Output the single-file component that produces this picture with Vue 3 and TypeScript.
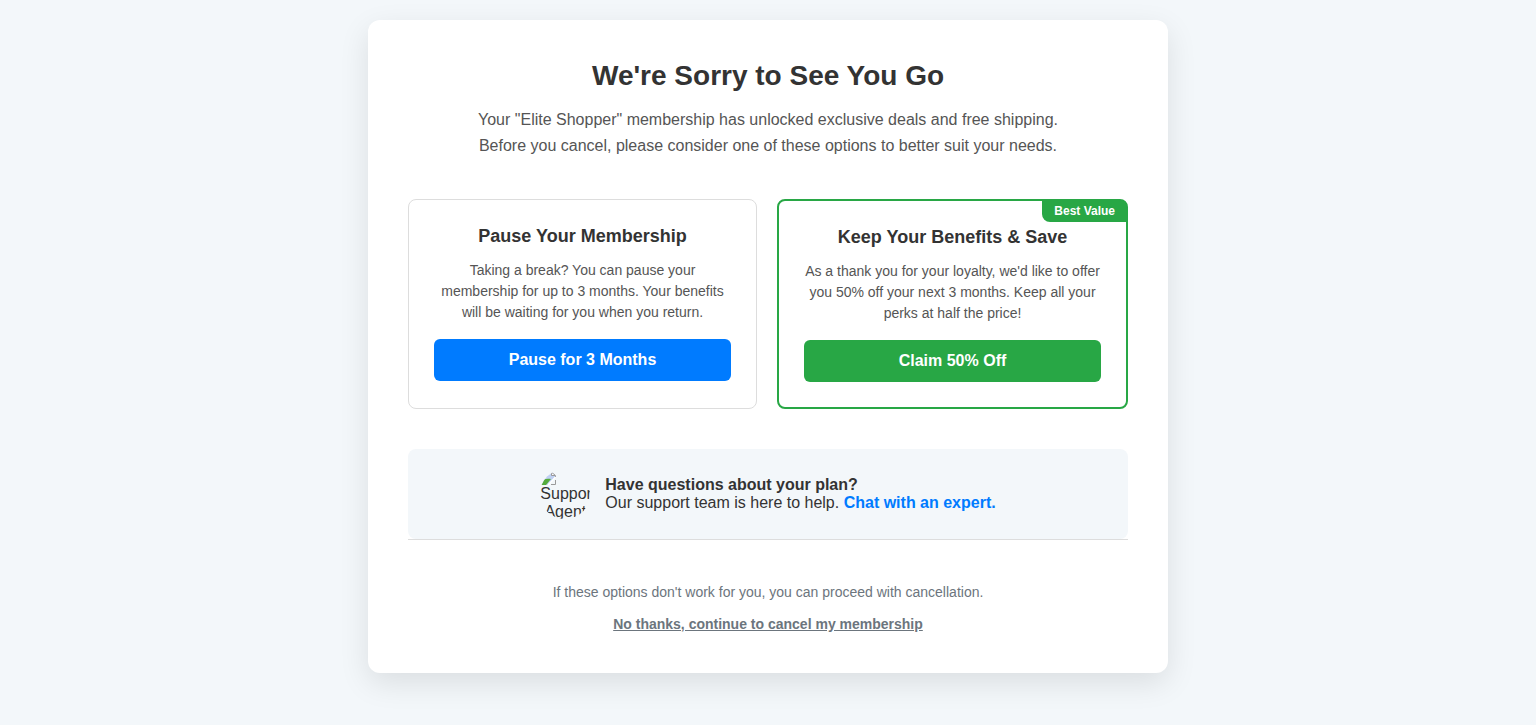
<script setup lang="ts">
interface Offer {
  title: string
  text: string
  action: string
  kind: 'pause' | 'save'
  badge?: string
}

const offers: Offer[] = [
  {
    title: 'Pause Your Membership',
    text: 'Taking a break? You can pause your membership for up to 3 months. Your benefits will be waiting for you when you return.',
    action: 'Pause for 3 Months',
    kind: 'pause',
  },
  {
    title: 'Keep Your Benefits & Save',
    text: "As a thank you for your loyalty, we'd like to offer you 50% off your next 3 months. Keep all your perks at half the price!",
    action: 'Claim 50% Off',
    kind: 'save',
    badge: 'Best Value',
  },
]
</script>

<template>
  <div class="page">
    <main class="panel">
      <header class="intro">
        <h1>We're Sorry to See You Go</h1>
        <p>
          Your "Elite Shopper" membership has unlocked exclusive deals and free shipping.
          Before you cancel, please consider one of these options to better suit your needs.
        </p>
      </header>

      <section class="offers">
        <article v-for="offer in offers" :key="offer.kind" class="offer" :class="offer.kind">
          <span v-if="offer.badge" class="badge">{{ offer.badge }}</span>
          <h2>{{ offer.title }}</h2>
          <p>{{ offer.text }}</p>
          <button type="button">{{ offer.action }}</button>
        </article>
      </section>

      <section class="support">
        <div class="avatar">
          <svg width="16" height="16" viewBox="0 0 16 16" aria-hidden="true">
            <path d="M1 2h10l4 4v2l-7 8H1z" fill="#bfd0f2" />
            <path d="M1 16v-3c2-3 6-4 10-3l-5 6z" fill="#54ab3c" />
            <path d="M11 3v3h4z" fill="#fff" />
            <path d="M9 3h2l4 3" fill="none" stroke="#a0a0a0" />
            <path d="M11.500 3v3.500h4V8" fill="none" stroke="#9a9a9a" />
            <path d="M8 16l7.500-8" fill="none" stroke="#fff" stroke-width="1.500" />
            <path d="M15.500 11v4.500H11" fill="none" stroke="#9a9a9a" />
          </svg>
          <span>Support Agent</span>
        </div>
        <div>
          <strong>Have questions about your plan?</strong>
          <p>Our support team is here to help. <a href="#chat">Chat with an expert.</a></p>
        </div>
      </section>

      <footer class="leave">
        <p>If these options don't work for you, you can proceed with cancellation.</p>
        <a href="#cancel">No thanks, continue to cancel my membership</a>
      </footer>
    </main>
  </div>
</template>

<style>
body {
  margin: 0;
  background: #f3f7fa;
}
</style>

<style scoped>
.page {
  box-sizing: border-box;
  min-height: 100vh;
  padding: 20px;
  background: #f3f7fa;
}

.panel {
  box-sizing: border-box;
  max-width: 800px;
  margin: 0 auto;
  padding: 40px;
  border-radius: 12px;
  background: #fff;
  box-shadow: 0 10px 30px rgba(0, 0, 0, 0.1);
  color: #333;
  font-family: 'Liberation Sans', Helvetica, Arial, sans-serif;
  font-size: 16px;
  line-height: 18px;
  text-align: center;
}

h1,
h2,
p {
  margin: 0;
}

.intro {
  margin-bottom: 40px;
}

.intro h1 {
  margin-bottom: 15px;
  font-size: 28px;
  line-height: 32px;
}

.intro p {
  max-width: 600px;
  margin: 0 auto;
  color: #555;
  line-height: 26px;
}

.offers {
  display: flex;
  gap: 20px;
  margin-bottom: 40px;
}

.offer {
  position: relative;
  flex: 1;
  padding: 25px;
  border: 1px solid #ddd;
  border-radius: 8px;
}

.offer.save {
  border: 2px solid #28a745;
}

.badge {
  position: absolute;
  top: -1px;
  right: -1px;
  padding: 4px 12px;
  border-radius: 0 8px;
  background: #28a745;
  color: #fff;
  font-size: 12px;
  font-weight: 700;
  line-height: 14px;
}

.offer h2 {
  margin-bottom: 12px;
  font-size: 18px;
  line-height: 23px;
}

.offer p {
  margin-bottom: 16px;
  color: #555;
  font-size: 14px;
  line-height: 21px;
}

.offer button {
  display: block;
  width: 100%;
  padding: 12px;
  border: 0;
  border-radius: 6px;
  background: #007bff;
  color: #fff;
  font: inherit;
  font-weight: 700;
  cursor: pointer;
}

.offer.save button {
  background: #28a745;
}

.support {
  display: flex;
  align-items: center;
  justify-content: center;
  gap: 15px;
  padding: 20px;
  border-radius: 8px;
  background: #f3f7fa;
  text-align: left;
}

.avatar {
  width: 50px;
  height: 50px;
  overflow: hidden;
  border-radius: 50%;
  text-align: center;
}

.avatar svg {
  display: block;
}

.support a {
  color: #007bff;
  font-weight: 700;
  text-decoration: none;
}

.leave {
  padding-top: 44px;
  border-top: 1px solid #ddd;
  color: #6c757d;
  font-size: 14px;
  line-height: 17px;
}

.leave p {
  margin-bottom: 15px;
}

.leave a {
  display: inline-block;
  color: inherit;
  font-weight: 700;
}
</style>
